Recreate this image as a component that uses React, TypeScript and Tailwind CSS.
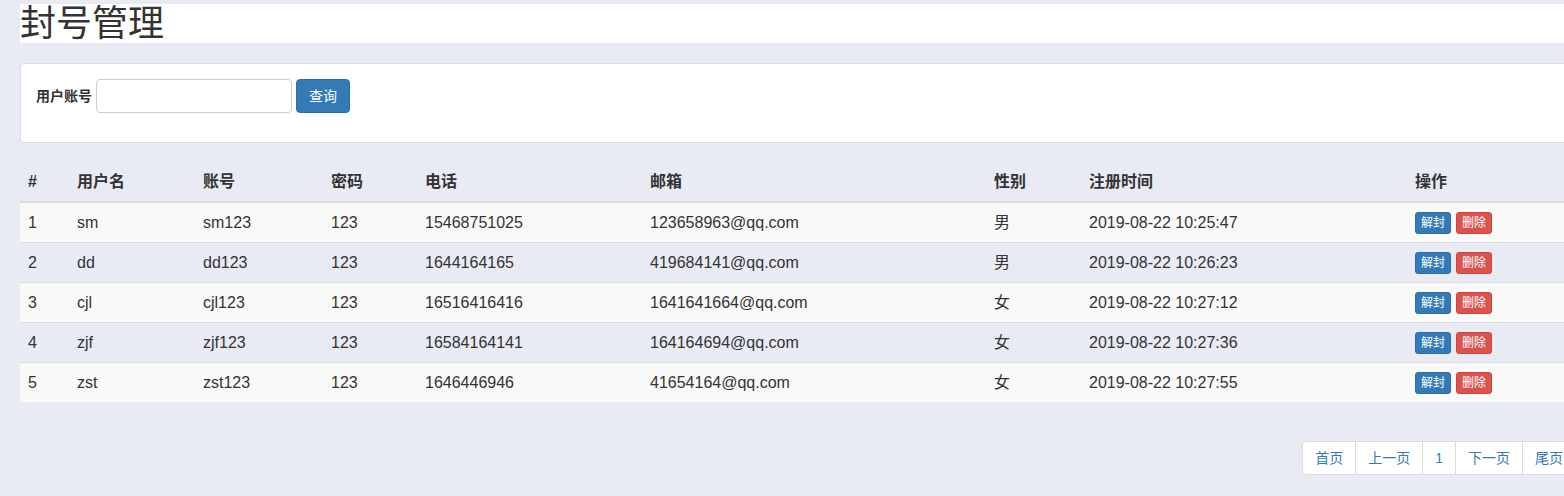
const users = [
  { id: 1, name: 'sm', account: 'sm123', pwd: '123', phone: '15468751025', email: '123658963@qq.com', sex: '男', time: '2019-08-22 10:25:47' },
  { id: 2, name: 'dd', account: 'dd123', pwd: '123', phone: '1644164165', email: '419684141@qq.com', sex: '男', time: '2019-08-22 10:26:23' },
  { id: 3, name: 'cjl', account: 'cjl123', pwd: '123', phone: '16516416416', email: '1641641664@qq.com', sex: '女', time: '2019-08-22 10:27:12' },
  { id: 4, name: 'zjf', account: 'zjf123', pwd: '123', phone: '16584164141', email: '164164694@qq.com', sex: '女', time: '2019-08-22 10:27:36' },
  { id: 5, name: 'zst', account: 'zst123', pwd: '123', phone: '1646446946', email: '41654164@qq.com', sex: '女', time: '2019-08-22 10:27:55' },
]

const font = { fontFamily: '"Liberation Sans", "Noto Sans CJK SC", sans-serif' }

export default function App() {
  return (
    <div className="min-h-screen w-full overflow-hidden bg-[#e8ebf3] text-[#333]" style={font}>
      <div className="w-[1556px] ml-5 pt-1">
        <h1 className="bg-white text-[36px] leading-[39px] font-normal">封号管理</h1>

        <div className="mt-5 bg-white border border-[#ddd] rounded p-[15px] pb-[29px]">
          <form className="flex items-center" onSubmit={e => e.preventDefault()}>
            <label className="text-[14px] font-bold mr-1">用户账号</label>
            <input className="w-[196px] h-[34px] border border-[#ccc] rounded bg-white px-3 text-[14px] outline-none" />
            <button type="submit" className="ml-1 h-[34px] px-3 bg-[#337ab7] border border-[#2e6da4] rounded text-white text-[14px]">查询</button>
          </form>
        </div>

        <table className="mt-[18px] w-full text-[16px] leading-[23px] border-collapse">
          <thead>
            <tr className="text-left border-b-2 border-[#ddd]">
              <th className="w-[49px] px-2 pt-[9px] pb-2">#</th>
              <th className="w-[126px] px-2 pt-[9px] pb-2">用户名</th>
              <th className="w-[128px] px-2 pt-[9px] pb-2">账号</th>
              <th className="w-[94px] px-2 pt-[9px] pb-2">密码</th>
              <th className="w-[225px] px-2 pt-[9px] pb-2">电话</th>
              <th className="w-[344px] px-2 pt-[9px] pb-2">邮箱</th>
              <th className="w-[95px] px-2 pt-[9px] pb-2">性别</th>
              <th className="w-[326px] px-2 pt-[9px] pb-2">注册时间</th>
              <th className="px-2 pt-[9px] pb-2">操作</th>
            </tr>
          </thead>
          <tbody>
            {users.map((u, i) => (
              <tr key={u.id} className={`border-t border-[#ddd] ${i % 2 === 0 ? 'bg-[#f9f9f9]' : ''}`}>
                <td className="p-2">{u.id}</td>
                <td className="p-2">{u.name}</td>
                <td className="p-2">{u.account}</td>
                <td className="p-2">{u.pwd}</td>
                <td className="p-2">{u.phone}</td>
                <td className="p-2">{u.email}</td>
                <td className="p-2">{u.sex}</td>
                <td className="p-2">{u.time}</td>
                <td className="p-2">
                  <div className="flex gap-[5px]">
                    <button className="px-[5px] py-px text-[12px] leading-[18px] text-white bg-[#337ab7] border border-[#2e6da4] rounded-[3px]">解封</button>
                    <button className="px-[5px] py-px text-[12px] leading-[18px] text-white bg-[#d9534f] border border-[#d43f3a] rounded-[3px]">删除</button>
                  </div>
                </td>
              </tr>
            ))}
          </tbody>
        </table>

        <div className="flex justify-end mt-[39px]">
          <ul className="flex text-[14px] leading-5 text-[#337ab7]">
            <li className="px-3 py-[6px] bg-white border border-[#ddd] rounded-l">首页</li>
            <li className="px-3 py-[6px] bg-white border border-[#ddd] -ml-px">上一页</li>
            <li className="px-3 py-[6px] bg-white border border-[#ddd] -ml-px">1</li>
            <li className="px-3 py-[6px] bg-white border border-[#ddd] -ml-px">下一页</li>
            <li className="px-3 py-[6px] bg-white border border-[#ddd] -ml-px rounded-r">尾页</li>
          </ul>
        </div>
      </div>
    </div>
  )
}
